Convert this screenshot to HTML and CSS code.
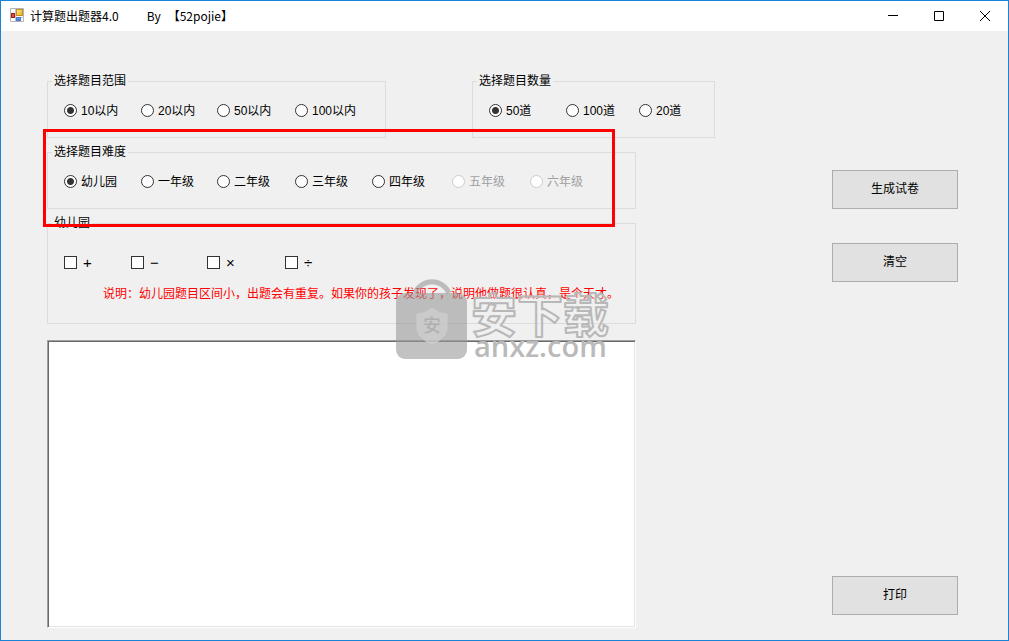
FILE: index.html
```html
<!DOCTYPE html>
<html lang="zh-CN">
<head>
<meta charset="utf-8">
<title>计算题出题器4.0</title>
<link rel="stylesheet" href="styles.css">
</head>
<body>
<div class="window">
  <header class="titlebar">
    <svg class="app-icon" viewBox="0 0 16 16" aria-hidden="true">
      <defs>
        <linearGradient id="gold" x1="0" y1="0" x2="1" y2="1"><stop offset="0" stop-color="#fff0a0"/><stop offset="1" stop-color="#e8a70c"/></linearGradient>
        <linearGradient id="blue" x1="0" y1="0" x2="0" y2="1"><stop offset="0" stop-color="#8fb8f4"/><stop offset="1" stop-color="#2f66cc"/></linearGradient>
      </defs>
      <path d="M.5.5h13v13h-13z" fill="#fff" stroke="#b4b4b4"/>
      <path d="M1 9.500h13M5.500 1v12" stroke="#c4c4c4"/>
      <rect x="1.500" y="5.500" width="3" height="4" fill="#d8503c" stroke="#a82218"/>
      <rect x="6.500" y="1.500" width="6" height="6" fill="url(#gold)" stroke="#c8921c"/>
      <rect x="6.500" y="9.500" width="4" height="3" fill="url(#blue)" stroke="#4a7ad0"/>
    </svg>
    <h1 class="title"><span>计算题出题器4.0</span><span class="author">By</span><span>【52pojie】</span></h1>
    <div class="caption-buttons">
      <button class="caption" type="button" aria-label="最小化"><svg viewBox="0 0 10 10"><path d="M0 4.500h10"/></svg></button>
      <button class="caption" type="button" aria-label="最大化"><svg viewBox="0 0 10 10"><path d="M.5.5h9v9h-9z"/></svg></button>
      <button class="caption" type="button" aria-label="关闭"><svg viewBox="0 0 10 10"><path d="M0 0l10 10M10 0L0 10"/></svg></button>
    </div>
  </header>
  <div class="client">
    <main class="form">
      <div class="top-groups">
        <fieldset class="group">
          <legend>选择题目范围</legend>
          <div class="options">
            <label class="option"><input type="radio" name="range" checked>10以内</label>
            <label class="option"><input type="radio" name="range">20以内</label>
            <label class="option"><input type="radio" name="range">50以内</label>
            <label class="option"><input type="radio" name="range">100以内</label>
          </div>
        </fieldset>
        <fieldset class="group">
          <legend>选择题目数量</legend>
          <div class="options options-count">
            <label class="option"><input type="radio" name="count" checked>50道</label>
            <label class="option"><input type="radio" name="count">100道</label>
            <label class="option"><input type="radio" name="count">20道</label>
          </div>
        </fieldset>
      </div>
      <fieldset class="group inset">
        <legend>选择题目难度</legend>
        <div class="options">
          <label class="option"><input type="radio" name="grade" checked>幼儿园</label>
          <label class="option"><input type="radio" name="grade">一年级</label>
          <label class="option"><input type="radio" name="grade">二年级</label>
          <label class="option"><input type="radio" name="grade">三年级</label>
          <label class="option"><input type="radio" name="grade">四年级</label>
          <label class="option disabled"><input type="radio" name="grade" disabled>五年级</label>
          <label class="option disabled"><input type="radio" name="grade" disabled>六年级</label>
        </div>
      </fieldset>
      <fieldset class="group group-operators inset">
        <legend>幼儿园</legend>
        <div class="options options-operators">
          <label class="option operator"><input type="checkbox">+</label>
          <label class="option operator"><input type="checkbox">−</label>
          <label class="option operator"><input type="checkbox">×</label>
          <label class="option operator"><input type="checkbox">÷</label>
        </div>
        <p class="note">说明：幼儿园题目区间小，出题会有重复。如果你的孩子发现了，说明他做题很认真，是个天才。</p>
      </fieldset>
      <textarea class="paper inset" aria-label="试卷"></textarea>
    </main>
    <aside class="actions">
      <button class="action" type="button">生成试卷</button>
      <button class="action" type="button">清空</button>
      <button class="action action-print" type="button">打印</button>
    </aside>
    <div class="highlight"></div>
    <svg class="watermark" viewBox="0 0 220 84" aria-hidden="true">
      <path d="M19 14a18.500 18.500 0 0 1 34 0" fill="none" stroke="#999" stroke-opacity=".6" stroke-width="5"/>
      <rect x="0" y="14" width="71" height="66" rx="9" fill="#999" fill-opacity=".6"/>
      <path d="M36 29q7 6 15 6v14q0 10-15 16-15-6-15-16V35q8 0 15-6z" fill="#d0d0d0" fill-opacity=".7" stroke="#ccc"/>
      <text class="mark-seal" x="36" y="53">安</text>
      <text class="mark-name" x="75" y="53">安下载</text>
      <text class="mark-site" x="78" y="78">anxz.com</text>
    </svg>
  </div>
</div>
</body>
</html>
```

FILE: styles.css
```css
* { box-sizing: border-box; }

body {
  margin: 0;
  font-family: "Liberation Sans", "Noto Sans CJK SC", sans-serif;
  font-size: 12px;
  line-height: 17px;
  color: #000;
}

button, textarea { font: inherit; color: inherit; }

.window {
  display: flex;
  flex-direction: column;
  min-height: 100vh;
  border: 1px solid #1883d7;
  background: #f0f0f0;
}

.titlebar {
  display: flex;
  align-items: center;
  height: 30px;
  padding-left: 9px;
  background: #fff;
}

.app-icon { width: 16px; height: 16px; margin-right: 4px; }

.title {
  display: flex;
  margin: 0;
  font-family: "Noto Sans CJK SC", sans-serif;
  font-size: 12px;
  font-weight: 400;
  line-height: 16px;
}

.author { margin: 0 7px 0 28px; }

.caption-buttons { display: flex; align-self: stretch; margin-left: auto; }

.caption {
  display: grid;
  place-items: center;
  width: 46px;
  padding: 0;
  border: 0;
  background: none;
}

.caption svg {
  width: 10px;
  height: 10px;
  fill: none;
  stroke: #000;
}

.client {
  position: relative;
  flex: 1;
  display: grid;
  grid-template-columns: minmax(0, 1fr) 126px;
  column-gap: 117px;
  padding: 0 50px 12px 46px;
}

.form {
  display: flex;
  flex-direction: column;
  gap: 6px;
  padding-top: 42px;
}

.top-groups {
  display: grid;
  grid-template-columns: 339fr 243fr;
  gap: 86px;
}

.inset { margin-right: 79px; }

.group {
  min-width: 0;
  margin-left: 0;
  padding: 13px 16px 17px;
  border: 1px solid #dcdcdc;
}

.top-groups .group { margin-right: 0; }

.group legend {
  margin-left: -12px;
  padding: 0 2px;
}

.options {
  display: grid;
  grid-template-columns: 77px 76px 78px 77px 80px 78px auto;
}

.options-count { grid-template-columns: 77px 73px auto; }
.options-operators { grid-template-columns: 67px 76px 78px auto; }

.option {
  display: flex;
  align-items: flex-start;
  gap: 4px;
  white-space: nowrap;
}

.operator {
  gap: 6px;
  font-size: 15px;
}

.disabled { color: #a0a0a0; }

.option input {
  appearance: none;
  flex: none;
  width: 13px;
  height: 13px;
  margin: 1px 0 0;
  border: 1px solid #333;
  background: #fff;
}

.option input[type="radio"] { border-radius: 50%; }

.option input[type="radio"]:checked {
  background: radial-gradient(circle, #333 0 3px, #fff 4px);
}

.option input[type="checkbox"] { margin-top: 2px; }

.option input:disabled { border-color: #ccc; }

.group-operators { padding: 22px 16px 20px; }

.note {
  margin: 15px 0 0 39px;
  color: #f00;
  white-space: nowrap;
}

.paper {
  flex: 1;
  min-height: 120px;
  margin-top: 10px;
  margin-left: 0;
  padding: 4px;
  border: 1px solid;
  border-color: #a0a0a0 #fff #fff #a0a0a0;
  border-radius: 0;
  outline: 0;
  background: #fff;
  box-shadow: inset 1px 1px #696969, inset -1px -1px #e3e3e3;
  resize: none;
}

.actions {
  display: flex;
  flex-direction: column;
  gap: 34px;
  padding: 139px 0 13px;
}

.action {
  height: 39px;
  border: 1px solid #adadad;
  border-radius: 0;
  background: #e1e1e1;
}

.action-print { margin-top: auto; }

.highlight {
  position: absolute;
  left: 42px;
  top: 98px;
  width: 572px;
  height: 98px;
  border: 3px solid #f00;
  pointer-events: none;
}

.watermark {
  position: absolute;
  left: 395px;
  top: 248px;
  width: 220px;
  height: 84px;
  overflow: visible;
  pointer-events: none;
}

.mark-seal {
  font: 500 18px "Noto Sans CJK SC", sans-serif;
  text-anchor: middle;
  fill: #b0b0b0;
}

.mark-name {
  font: 700 46px "Noto Sans CJK SC", sans-serif;
  fill: #f0f0f0;
  fill-opacity: .3;
  stroke: #b8b8b8;
  stroke-width: 2px;
  stroke-linejoin: round;
}

.mark-site {
  font: 600 29px "Open Sans", sans-serif;
  fill: #bababa;
}
```
